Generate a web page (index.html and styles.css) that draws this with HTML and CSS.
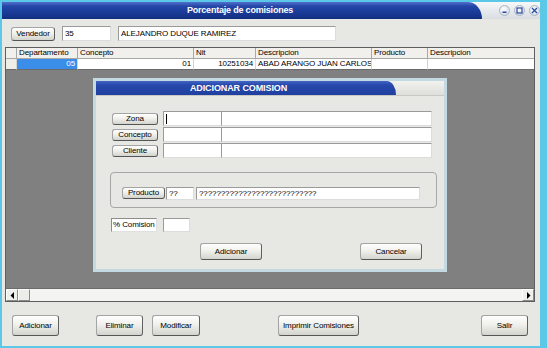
FILE: index.html
```html
<!DOCTYPE html>
<html lang="es">
<head>
    <meta charset="UTF-8">
    <title>Porcentaje de comisiones</title>
    <link rel="stylesheet" href="styles.css">
</head>
<body>
    <div class="window">
        <div class="titlebar">
            <div class="title-blue"><span>Porcentaje de comisiones</span></div>
            <div class="title-tail">
                <span class="wbtn">
                    <svg width="9" height="9" viewBox="0 0 9 9"><rect x="2.5" y="5.5" width="4" height="1.5" fill="#2a4aa0"/></svg>
                </span>
                <span class="wbtn">
                    <svg width="9" height="9" viewBox="0 0 9 9"><rect x="2" y="2" width="5" height="5" fill="none" stroke="#2a4aa0" stroke-width="1.2"/></svg>
                </span>
                <span class="wbtn">
                    <svg width="9" height="9" viewBox="0 0 9 9"><path d="M2 2 L7 7 M7 2 L2 7" stroke="#2a4aa0" stroke-width="1.3"/></svg>
                </span>
            </div>
        </div>

        <div class="main">
            <div class="top-row">
                <button class="btn btn-vendedor">Vendedor</button>
                <div class="field f-code">35</div>
                <div class="field f-name">ALEJANDRO DUQUE RAMIREZ</div>
            </div>

            <div class="grid">
                <div class="grid-line grid-head">
                    <div class="cell c-ind"></div>
                    <div class="cell c-dep">Departamento</div>
                    <div class="cell c-con">Concepto</div>
                    <div class="cell c-nit">Nit</div>
                    <div class="cell c-desc">Descripcion</div>
                    <div class="cell c-prod">Producto</div>
                    <div class="cell c-desc2">Descripcion</div>
                </div>
                <div class="grid-line grid-row">
                    <div class="cell c-ind"></div>
                    <div class="cell c-dep num selected">05</div>
                    <div class="cell c-con num">01</div>
                    <div class="cell c-nit num">10251034</div>
                    <div class="cell c-desc">ABAD ARANGO JUAN CARLOS</div>
                    <div class="cell c-prod"></div>
                    <div class="cell c-desc2"></div>
                </div>
                <div class="grid-empty"></div>
                <div class="hscroll">
                    <div class="sb-btn">
                        <svg width="5" height="7" viewBox="0 0 5 7"><path d="M4 0 L0.5 3.5 L4 7 Z" fill="#000"/></svg>
                    </div>
                    <div class="sb-thumb"></div>
                    <div class="sb-track"></div>
                    <div class="sb-btn">
                        <svg width="5" height="7" viewBox="0 0 5 7"><path d="M1 0 L4.5 3.5 L1 7 Z" fill="#000"/></svg>
                    </div>
                </div>

                <div class="dialog">
                    <div class="dlg-title">
                        <div class="dlg-blue"><span>ADICIONAR COMISION</span></div>
                        <div class="dlg-tail"></div>
                    </div>
                    <div class="dlg-body">
                        <div class="lookup">
                            <button class="btn lk-btn">Zona</button>
                            <div class="field"><span class="caret"></span></div>
                            <div class="field"></div>
                            <button class="btn lk-btn">Concepto</button>
                            <div class="field"></div>
                            <div class="field"></div>
                            <button class="btn lk-btn">Cliente</button>
                            <div class="field"></div>
                            <div class="field"></div>
                        </div>

                        <div class="group">
                            <button class="btn btn-prod">Producto</button>
                            <div class="field f-pcode">??</div>
                            <div class="field f-pname">???????????????????????????</div>
                        </div>

                        <div class="pct-row">
                            <div class="pct-label">% Comision</div>
                            <div class="field f-pct"></div>
                        </div>

                        <div class="dlg-actions">
                            <button class="btn dlg-btn">Adicionar</button>
                            <button class="btn dlg-btn btn-cancel">Cancelar</button>
                        </div>
                    </div>
                </div>
            </div>

            <div class="actions">
                <button class="btn act b-add">Adicionar</button>
                <button class="btn act b-del">Eliminar</button>
                <button class="btn act b-mod">Modificar</button>
                <button class="btn act b-print">Imprimir Comisiones</button>
                <button class="btn act b-exit">Salir</button>
            </div>
        </div>
    </div>
</body>
</html>
```

FILE: styles.css
```css
* { box-sizing: border-box; }
body {
    margin: 0;
    background: #5ac8e6;
    font-family: "Liberation Sans", Arial, sans-serif;
    font-size: 8px;
    letter-spacing: -0.1px;
    color: #000;
}
.window {
    width: 547px;
    height: 348px;
    border-top: 2px solid #5ac8e6;
    border-left: 2px solid #5ac8e6;
    border-right: 7px solid #5ac8e6;
    border-bottom: 2px solid #5ac8e6;
    background: #e7e8e4;
    display: flex;
    flex-direction: column;
}

/* title bar */
.titlebar {
    height: 17px;
    display: flex;
    background: linear-gradient(#f6f7f8, #d9dde2);
}
.title-blue {
    flex: 1;
    background: linear-gradient(#5070cc 0%, #2446a8 25%, #1b3b99 60%, #112f80 100%);
    border-top-right-radius: 14px 17px;
    color: #fff;
    font-weight: bold;
    font-size: 9px;
    letter-spacing: -0.2px;
    line-height: 17px;
    text-align: center;
    padding-right: 4px;
}
.title-tail {
    width: 58px;
    display: flex;
    align-items: center;
    justify-content: flex-end;
    gap: 4px;
}
.wbtn {
    width: 11px;
    height: 11px;
    border-radius: 50%;
    background: radial-gradient(circle at 40% 35%, #ffffff, #c9d3de);
    border: 1px solid #a9b6c4;
    display: flex;
    align-items: center;
    justify-content: center;
}
.wbtn svg { display: block; }

/* main */
.main {
    flex: 1;
    padding: 7px 5px 10px 3px;
    display: flex;
    flex-direction: column;
}
.top-row {
    display: flex;
    align-items: center;
    height: 15px;
}
.btn {
    font-family: inherit;
    font-size: 8px;
    letter-spacing: -0.1px;
    color: #000;
    padding: 0;
    white-space: nowrap;
    background: linear-gradient(#ffffff 0%, #f0f0ec 45%, #d4d4ce 100%);
    border: 1px solid #a4a4a4;
    border-right-color: #606060;
    border-bottom-color: #555;
    border-radius: 3px;
    line-height: 1;
}
.btn-vendedor {
    margin-left: 6px;
    width: 44px;
    height: 14px;
}
.field {
    background: #fff;
    border: 1px solid #dcdcdc;
    border-top-color: #9a9a9a;
    border-left-color: #9a9a9a;
    height: 15px;
    line-height: 13px;
    padding-left: 2px;
    white-space: nowrap;
    overflow: hidden;
}
.f-code { margin-left: 7px; width: 49px; }
.f-name { margin-left: 7px; width: 218px; }

/* grid */
.grid {
    position: relative;
    margin-top: 6px;
    width: 530px;
    height: 255px;
    border: 1px solid #5e5e5e;
    display: flex;
    flex-direction: column;
}
.grid-line {
    display: flex;
    height: 11px;
}
.cell {
    height: 11px;
    line-height: 10px;
    padding: 0 2px;
    border-right: 1px solid #a8a8a8;
    border-bottom: 1px solid #a8a8a8;
    white-space: nowrap;
    overflow: hidden;
}
.grid-head .cell { background: #f1f0ec; }
.grid-row .cell { background: #fff; border-color: #d4d4d4; border-bottom-color: #6a6a6a; }
.grid-row .c-ind { background: #eeede8; }
.c-ind { width: 11px; }
.c-dep { width: 61px; }
.c-con { width: 116px; }
.c-nit { width: 62px; }
.c-desc { width: 116px; }
.c-prod { width: 56px; }
.c-desc2 { width: 106px; border-right: none; }
.num { text-align: right; }
.grid-row .selected { background: #3a8de8; color: #fff; }
.grid-empty {
    flex: 1;
    background: #808080;
}
.hscroll {
    height: 13px;
    display: flex;
    background: #f4f4f3;
    border-top: 1px solid #6c6c6c;
}
.sb-btn {
    width: 12px;
    display: flex;
    align-items: center;
    justify-content: center;
    background: #efefed;
    border: 1px solid #fff;
    border-right-color: #8a8a8a;
    border-bottom-color: #8a8a8a;
}
.sb-thumb {
    width: 12px;
    background: #ecece9;
    border: 1px solid #fff;
    border-right-color: #8a8a8a;
    border-bottom-color: #8a8a8a;
}
.sb-track { flex: 1; }

/* dialog */
.dialog {
    position: absolute;
    left: 87px;
    top: 30px;
    width: 354px;
    height: 194px;
    border: 3px solid #c5d9e3;
    background: #e7e8e4;
    display: flex;
    flex-direction: column;
}
.dlg-title {
    height: 15px;
    display: flex;
    background: linear-gradient(#f2f2ef, #dedfdb);
    border-bottom: 1px solid #c8c8c4;
}
.dlg-blue {
    width: 300px;
    background: linear-gradient(#4264c4 0%, #2648aa 30%, #1f40a0 100%);
    border-top-right-radius: 10px 15px;
    color: #fff;
    font-weight: bold;
    font-size: 9px;
    letter-spacing: -0.1px;
    line-height: 14px;
    text-align: center;
    padding-right: 15px;
}
.dlg-tail { flex: 1; }
.dlg-body {
    flex: 1;
    padding: 15px 0 0 14px;
}
.lookup {
    margin-left: 2px;
    display: grid;
    grid-template-columns: 46px 61px 211px;
    grid-auto-rows: 15px;
    column-gap: 1px;
    row-gap: 1px;
    align-items: center;
}
.lookup .field { height: 15px; }
.lookup .field:nth-child(3n+2) { margin-left: 4px; width: 61px; }
.lk-btn {
    width: 46px;
    height: 12px;
}
.caret {
    display: inline-block;
    width: 1px;
    height: 10px;
    background: #000;
    vertical-align: middle;
}
.group {
    margin-top: 14px;
    width: 327px;
    height: 36px;
    border: 1px solid #a6a6a6;
    border-radius: 4px;
    display: flex;
    align-items: flex-start;
    padding: 14px 0 0 11px;
}
.btn-prod { width: 43px; height: 12px; }
.f-pcode { margin-left: 1px; width: 28px; height: 13px; line-height: 11px; }
.f-pname { margin-left: 2px; width: 224px; height: 13px; line-height: 11px; }
.pct-row {
    margin-top: 10px;
    display: flex;
    margin-left: 1px;
}
.pct-label {
    width: 46px;
    height: 14px;
    background: #fff;
    border: 1px solid #e0e0e0;
    border-top-color: #8c8c8c;
    border-left-color: #8c8c8c;
    line-height: 12px;
    padding-left: 1px;
    white-space: nowrap;
}
.f-pct { margin-left: 6px; width: 27px; height: 14px; }
.dlg-actions {
    margin-top: 11px;
    display: flex;
}
.dlg-btn { width: 62px; height: 17px; margin-left: 90px; }
.btn-cancel { margin-left: 98px; }

/* bottom buttons */
.actions {
    margin-top: 13px;
    display: flex;
    height: 21px;
}
.act { height: 21px; width: 47px; }
.b-add { margin-left: 7px; }
.b-del { margin-left: 37px; }
.b-mod { margin-left: 9px; width: 48px; }
.b-print { margin-left: 78px; width: 81px; }
.b-exit { margin-left: 122px; }
```
